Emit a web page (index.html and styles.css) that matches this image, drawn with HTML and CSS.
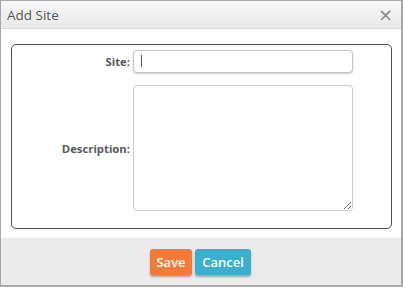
FILE: index.html
```html
<!DOCTYPE html>
<html lang="en">
<head>
    <meta charset="UTF-8">
    <meta name="viewport" content="width=device-width, initial-scale=1.0">
    <title>Add Site</title>
    <link rel="stylesheet" href="styles.css">
</head>
<body>
    <div class="dialog">
        <div class="dialog-header">
            <span class="dialog-title">Add Site</span>
            <span class="close-icon">×</span>
        </div>

        <div class="dialog-body">
            <div class="site-form">
                <label class="form-label" for="siteName">Site:</label>
                <div class="input-wrap">
                    <input type="text" id="siteName" class="form-input">
                    <span class="caret"></span>
                </div>
                <label class="form-label" for="siteDesc">Description:</label>
                <textarea id="siteDesc" class="form-textarea"></textarea>
            </div>
        </div>

        <div class="dialog-footer">
            <button class="btn btn-save">Save</button>
            <button class="btn btn-cancel">Cancel</button>
        </div>
    </div>
</body>
</html>
```

FILE: styles.css
```css
* {
    box-sizing: border-box;
}

body {
    margin: 0;
    font-family: "Open Sans", Arial, sans-serif;
    background: #fff;
}

.dialog {
    width: 403px;
    height: 287px;
    border: 1px solid #a8a8a8;
    border-right-width: 2px;
    display: flex;
    flex-direction: column;
    background: #fff;
}

.dialog-header {
    height: 28px;
    background: linear-gradient(#f7f7f7, #e9e9e9);
    border-bottom: 1px solid #dcdcdc;
    display: flex;
    align-items: center;
    justify-content: space-between;
    padding: 0 8px 0 6px;
}

.dialog-title {
    font-size: 13.5px;
    color: #555;
}

.close-icon {
    font-size: 18px;
    color: #888;
    line-height: 1;
    font-family: "DejaVu Sans", sans-serif;
}

.dialog-body {
    padding: 15px 9px 9px 10px;
}

.site-form {
    border: 1px solid #4b515c;
    border-radius: 5px;
    display: grid;
    grid-template-columns: 118px 220px;
    column-gap: 3px;
    row-gap: 12px;
    align-items: center;
    padding: 5px 0 17px 0;
}

.form-label {
    text-align: right;
    font-size: 11.3px;
    font-weight: bold;
    color: #555a63;
}

.input-wrap {
    position: relative;
}

.form-input {
    display: block;
    width: 220px;
    height: 23px;
    border: 1px solid #c4c4c4;
    border-radius: 4px;
    box-shadow: 0 1px 2px rgba(0, 0, 0, 0.2);
    outline: none;
}

.caret {
    position: absolute;
    left: 8px;
    top: 5px;
    width: 1px;
    height: 12px;
    background: #555;
}

.form-textarea {
    display: block;
    width: 220px;
    height: 126px;
    border: 1px solid #cacaca;
    border-radius: 4px;
    resize: both;
    outline: none;
}

.dialog-footer {
    flex: 1;
    background: #ebebeb;
    display: flex;
    justify-content: center;
    align-items: flex-start;
    gap: 3px;
    padding-top: 11px;
    padding-right: 1px;
    border-bottom: 1px solid #a8a8a8;
}

.btn {
    height: 26px;
    border: none;
    border-radius: 3px;
    color: #fff;
    font-family: "Open Sans", Arial, sans-serif;
    font-size: 13px;
    font-weight: 600;
    padding: 0;
    box-shadow: 0 2px 2px rgba(0, 0, 0, 0.3);
    cursor: pointer;
}

.btn-save {
    width: 42px;
    background: #f37b36;
}

.btn-cancel {
    width: 56px;
    background: #3aafcf;
}
```
